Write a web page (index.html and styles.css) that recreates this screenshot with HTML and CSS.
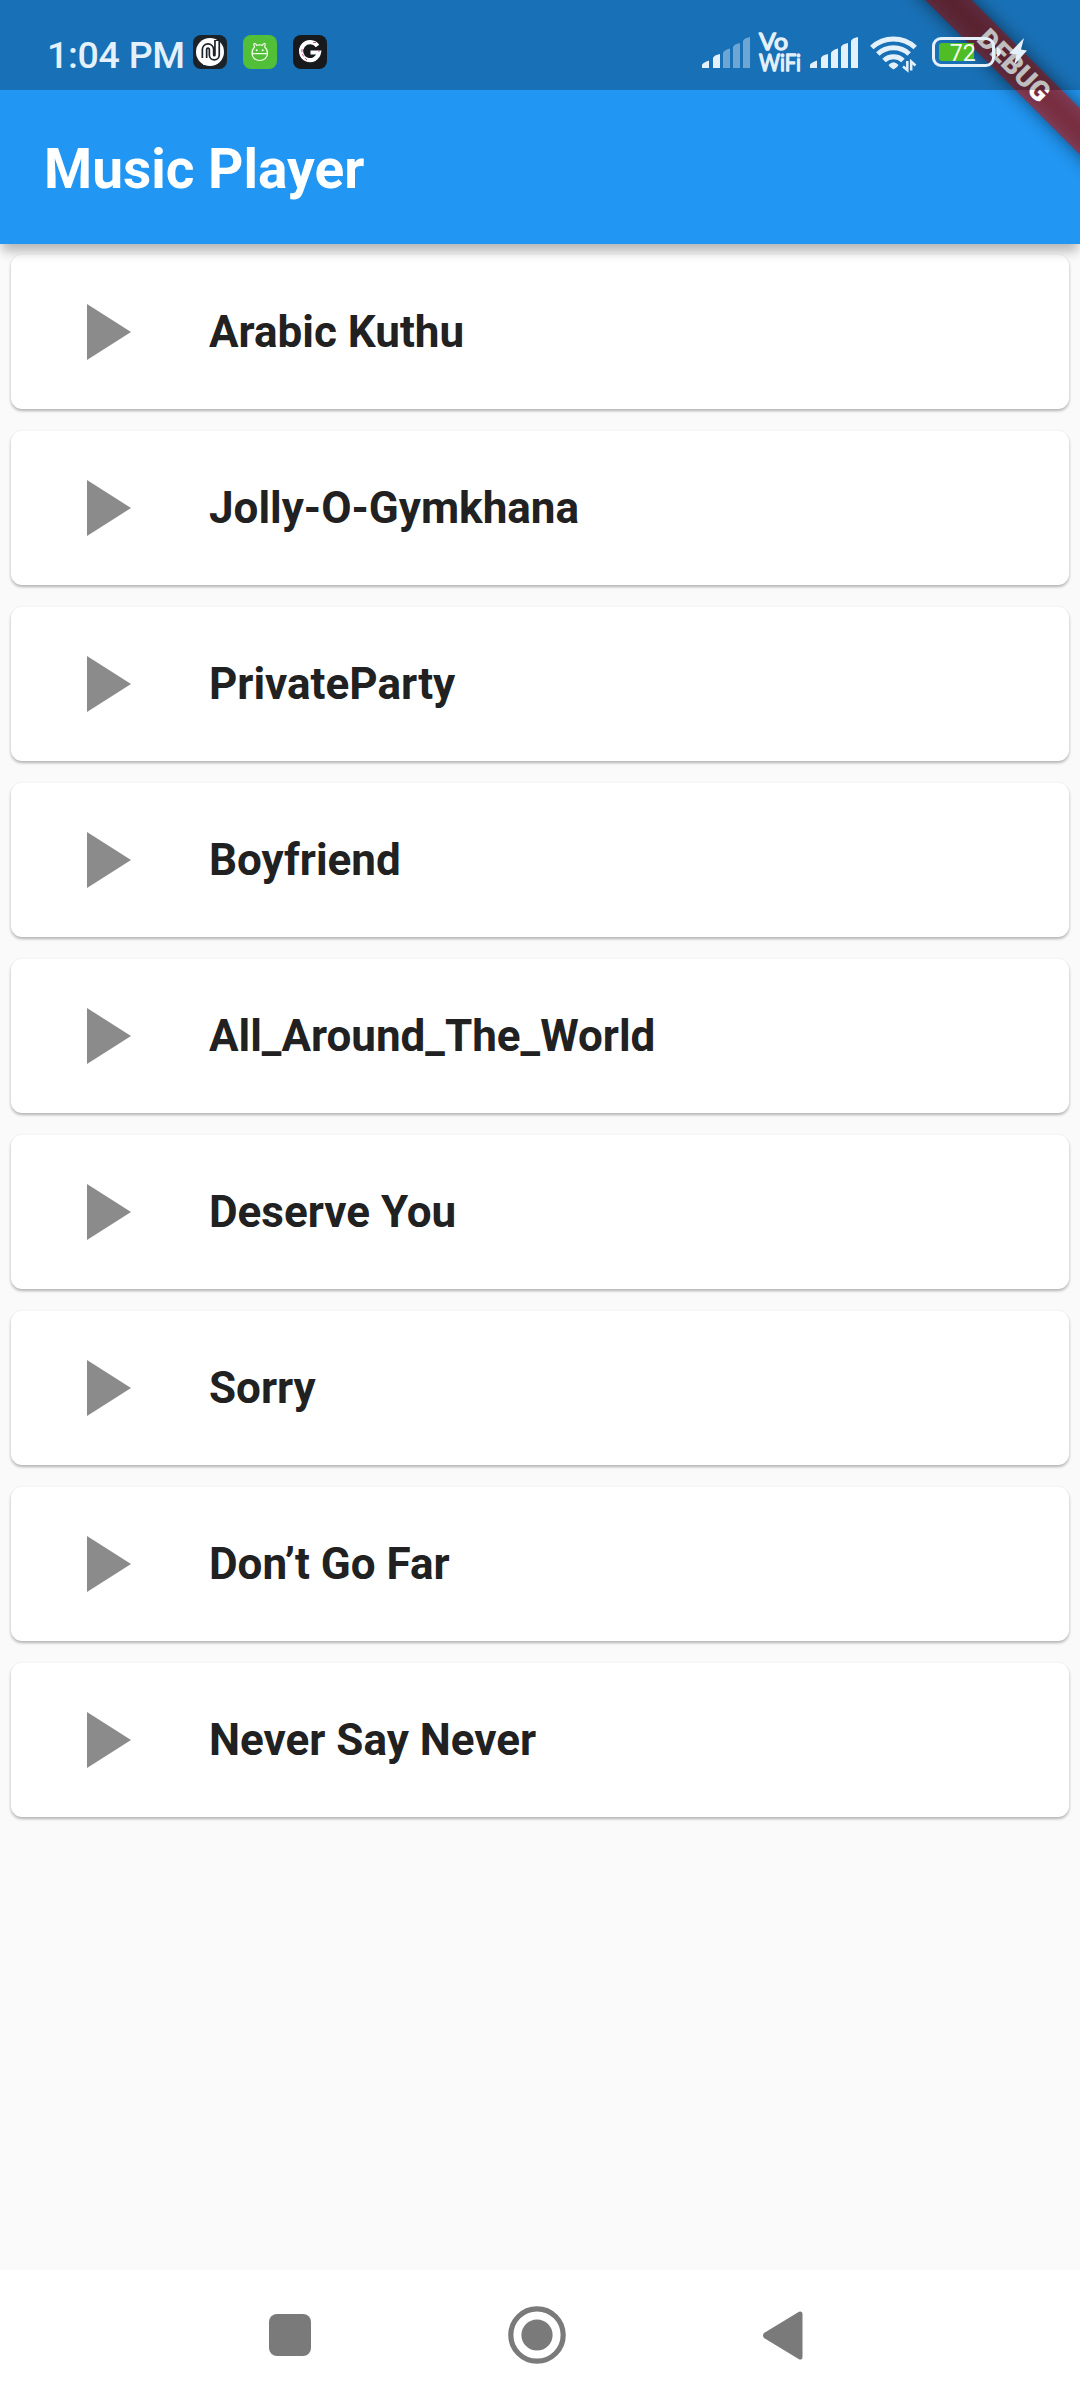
FILE: index.html
```html
<!DOCTYPE html>
<html lang="en">
<head>
<meta charset="utf-8">
<title>Music Player</title>
<link rel="stylesheet" href="styles.css">
</head>
<body>
<div class="screen">
  <header class="top">
    <div class="status">
      <span class="clock">1:04 PM</span>
      <div class="notifications">
        <svg class="app-icon" viewBox="0 0 34 34"><rect width="34" height="34" rx="8" fill="#1b2228"/><circle cx="17" cy="17" r="14" fill="#fff"/><g fill="none"><path d="M11.500 23V14.500a3.500 3.500 0 0 1 7 0V20a2.800 2.800 0 0 0 5.600 0V5" stroke="#1b2228" stroke-width="6"/><path d="M11.500 30V14.500a3.500 3.500 0 0 1 7 0V20a2.800 2.800 0 0 0 5.600 0V6" stroke="#fff" stroke-width="2.600"/></g></svg>
        <svg class="app-icon" viewBox="0 0 34 34"><rect width="34" height="34" rx="8" fill="#52bf38"/><g fill="none" stroke="#f2ffe9" stroke-width="1.200"><path d="M9 18.500C9 15 10.500 13 11.500 12L10.800 9.500C10.800 8 13 8 13.500 10.300C15.500 9.700 17.500 9.700 19.500 10.300C20 8 22.500 8 22.200 9.500L21.700 12C23.500 13.500 24.500 16 24.500 18.500C24.500 22.500 21 25.500 16.700 25.500S9 22.500 9 18.500ZM9 18.700H24.500"/></g><circle cx="13.700" cy="15.200" r="1" fill="#fff"/><circle cx="19.700" cy="15.200" r="1" fill="#fff"/></svg>
        <svg class="app-icon" viewBox="0 0 34 34"><rect width="34" height="34" rx="8" fill="#17191c"/><path d="M24.500 11A9 9 0 1 0 26 17.500H17.500" fill="none" stroke="#fff" stroke-width="4.200"/><path d="M9 14Q8 20 14 25M20 7.500H23M25 16H27" fill="none" stroke="#d64a92" stroke-width="1" stroke-dasharray="3 2"/></svg>
      </div>
      <div class="indicators">
        <svg class="signal" viewBox="0 0 48 32"><g fill="#e4f0fa"><path d="M0 28Q0 26 7 23.500V31H0ZM11 21Q12 18 18 17V31H11Z"/><path opacity=".42" d="M21 16Q22 13 28 11.500V31H21ZM31 10Q32 7 38 6V31H31ZM41 4Q42 1 48 0V31H41Z"/></g></svg>
        <svg class="vowifi" viewBox="0 0 42 42"><text x="0" y="17.500" textLength="29" lengthAdjust="spacingAndGlyphs">Vo</text><text x="0" y="38.500" textLength="42" lengthAdjust="spacingAndGlyphs">WiFi</text></svg>
        <svg class="signal second" viewBox="0 0 48 32"><path fill="#e4f0fa" d="M0 28Q0 26 7 23.500V31H0ZM11 21Q12 18 18 17V31H11ZM21 16Q22 13 28 11.500V31H21ZM31 10Q32 7 38 6V31H31ZM41 4Q42 1 48 0V31H41Z"/></svg>
        <svg class="wifi" viewBox="0 0 48 36"><g fill="none" stroke="#e4f0fa" stroke-width="5"><path d="M1.800 12.500A32 32 0 0 1 45.200 12.500M7.800 19A23 23 0 0 1 39.200 19M14 25.500A14 14 0 0 1 33 25.500"/></g><path d="M18.500 30Q23.500 24.500 28.500 30Q27.500 32.500 23.500 34.500Q19.500 32.500 18.500 30Z" fill="#e4f0fa"/><path d="M37.300 26V35L33 31.500M41.200 35.500V26.500L45.500 30.500" fill="none" stroke="#e4f0fa" stroke-width="2.500"/></svg>
        <svg class="battery" viewBox="0 0 80 36"><rect x="1.500" y="4.500" width="60" height="27" rx="7.500" fill="none" stroke="#e4f0fa" stroke-width="3"/><path d="M10 9H42V27H10Q7 27 7 24V12Q7 9 10 9Z" fill="#4fbd25"/><text x="17.800" y="26.500" textLength="26" lengthAdjust="spacingAndGlyphs">72</text><path d="M65 13Q69 15 69 18T65 23Z" fill="#e4f0fa"/></svg>
        <svg class="bolt" viewBox="0 0 20 30"><path fill="#e4f0fa" d="M15 0L0 15.500L7.500 16.500L5 27L18 12.500L12 11.500Z"/></svg>
      </div>
    </div>
    <div class="app-bar"><h1>Music Player</h1></div>
    <div class="debug"><div class="debug-shadow"></div><div class="debug-strip">DEBUG</div></div>
  </header>
  <main class="songs">
    <div class="card"><svg class="play" viewBox="0 0 44 56"><path d="M0 0L44 28L0 56Z"/></svg><span>Arabic Kuthu</span></div>
    <div class="card"><svg class="play" viewBox="0 0 44 56"><path d="M0 0L44 28L0 56Z"/></svg><span>Jolly-O-Gymkhana</span></div>
    <div class="card"><svg class="play" viewBox="0 0 44 56"><path d="M0 0L44 28L0 56Z"/></svg><span>PrivateParty</span></div>
    <div class="card"><svg class="play" viewBox="0 0 44 56"><path d="M0 0L44 28L0 56Z"/></svg><span>Boyfriend</span></div>
    <div class="card"><svg class="play" viewBox="0 0 44 56"><path d="M0 0L44 28L0 56Z"/></svg><span>All_Around_The_World</span></div>
    <div class="card"><svg class="play" viewBox="0 0 44 56"><path d="M0 0L44 28L0 56Z"/></svg><span>Deserve You</span></div>
    <div class="card"><svg class="play" viewBox="0 0 44 56"><path d="M0 0L44 28L0 56Z"/></svg><span>Sorry</span></div>
    <div class="card"><svg class="play" viewBox="0 0 44 56"><path d="M0 0L44 28L0 56Z"/></svg><span>Don’t Go Far</span></div>
    <div class="card"><svg class="play" viewBox="0 0 44 56"><path d="M0 0L44 28L0 56Z"/></svg><span>Never Say Never</span></div>
  </main>
  <nav class="nav">
    <svg class="recent" viewBox="0 0 42 42"><rect width="42" height="42" rx="8"/></svg>
    <svg class="home" viewBox="0 0 58 58"><circle cx="29" cy="29" r="26.200" fill="none" stroke="#7a7a7a" stroke-width="5.200"/><circle cx="29" cy="29" r="15.600"/></svg>
    <svg class="back" viewBox="0 0 40 49"><path d="M1 22L36 .8Q39.500-.5 39.500 3V46Q39.500 49.500 36 48.200L1 27Q-1 24.500 1 22Z"/></svg>
  </nav>
</div>
</body>
</html>
```

FILE: styles.css
```css
* { box-sizing: border-box; }
body { margin: 0; font-family: Roboto, sans-serif; }
svg { display: block; flex: none; overflow: visible; }

.screen {
  display: flex;
  flex-direction: column;
  width: 1080px;
  height: 2400px;
  background: #fafafa;
  overflow: hidden;
}

.top {
  position: relative;
  z-index: 1;
  background: #2196f3;
  box-shadow: 0 9px 11px -2px rgba(0, 0, 0, .28);
}

.status {
  position: relative;
  z-index: 2;
  display: flex;
  align-items: flex-start;
  height: 90px;
  padding: 35px 51px 0 47px;
  background: rgba(0, 0, 0, .25);
}
.clock {
  width: 146px;
  margin-top: -2px;
  font-size: 37.5px;
  line-height: 44px;
  font-weight: 500;
  letter-spacing: -.3px;
  color: #e4f0fa;
  white-space: nowrap;
}
.notifications { display: flex; gap: 16px; }
.app-icon { width: 34px; height: 34px; }
.indicators { display: flex; margin-left: auto; }
.signal { width: 48px; height: 32px; margin: 2px 9px 0 0; }
.signal.second { margin-right: 12px; }
.vowifi {
  width: 42px;
  height: 42px;
  margin: -3px 9px 0 0;
  font: 400 22.5px Lato, sans-serif;
  fill: #e4f0fa;
  stroke: #e4f0fa;
  stroke-width: 1.3px;
  stroke-linejoin: round;
}
.wifi { width: 48px; height: 36px; margin-right: 14px; }
.battery {
  width: 80px;
  height: 36px;
  margin: -1px -3px 0 0;
  font-size: 23px;
  font-weight: 400;
  fill: #f4fbf0;
}
.bolt { width: 20px; height: 30px; margin-top: 3px; }

.app-bar {
  display: flex;
  align-items: center;
  height: 154px;
  padding: 3px 0 0 44px;
}
.app-bar h1 { margin: 0; font-size: 55px; line-height: 64px; font-weight: 700; color: #fff; }

.debug {
  position: absolute;
  z-index: 1;
  top: 0;
  right: 0;
  width: 240px;
  height: 244px;
  overflow: hidden;
}
.debug-shadow, .debug-strip {
  position: absolute;
  left: 4px;
  top: 49px;
  width: 340px;
  height: 33px;
  transform: rotate(45deg);
}
.debug-shadow { background: rgba(0, 0, 0, .5); filter: blur(9px); }
.debug-strip {
  background: rgba(183, 28, 28, .627);
  color: #fff;
  font-size: 28px;
  line-height: 33px;
  font-weight: 900;
  text-align: center;
}

.songs {
  flex: 1;
  display: flex;
  flex-direction: column;
  gap: 22px;
  padding: 11px;
}
.card {
  display: flex;
  align-items: center;
  height: 154px;
  padding-left: 76px;
  border-radius: 11px;
  background: #fff;
  box-shadow: 0 2px 3px rgba(0, 0, 0, .26), 0 1px 4px rgba(0, 0, 0, .06);
  font-size: 44px;
  font-weight: 700;
  color: #212121;
}
.play { width: 44px; height: 56px; margin-right: 78px; fill: #8b8b8b; }

.nav {
  display: flex;
  align-items: center;
  height: 130px;
  padding-left: 269px;
  background: #fff;
  fill: #7a7a7a;
}
.recent { width: 42px; height: 42px; }
.home { width: 58px; height: 58px; margin: 0 197px 0 197px; }
.back { width: 40px; height: 49px; }
```
